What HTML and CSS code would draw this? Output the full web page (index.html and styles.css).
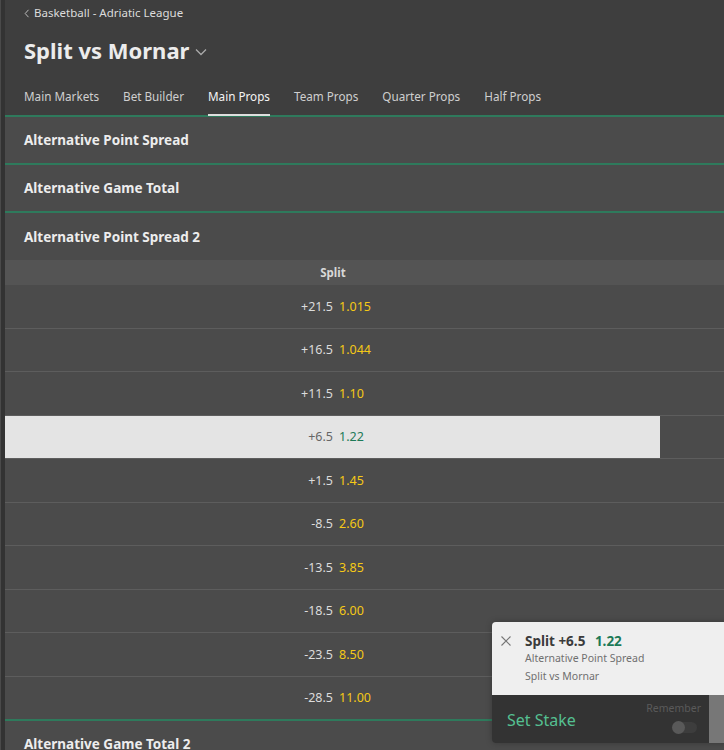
FILE: index.html
```html
<!DOCTYPE html>
<html lang="en">
<head>
<meta charset="utf-8">
<title>Split vs Mornar</title>
<link rel="stylesheet" href="styles.css">
</head>
<body>
<div class="page">
  <div class="gutter"></div>
  <main class="content">
    <header class="header">
      <div class="crumb"><svg class="crumb-arrow" width="6" height="9" viewBox="0 0 6 9"><path d="M4.5 0.8 L1.2 4.5 L4.5 8.2" fill="none" stroke="#bbb" stroke-width="1"/></svg>Basketball - Adriatic League</div>
      <h1 class="title">Split vs Mornar
        <svg class="chev" width="12" height="8" viewBox="0 0 12 8"><path d="M1 1.5 L6 6.5 L11 1.5" fill="none" stroke="#aaa" stroke-width="1.3"/></svg>
      </h1>
      <nav class="tabs">
        <a class="tab">Main Markets</a>
        <a class="tab">Bet Builder</a>
        <a class="tab active">Main Props</a>
        <a class="tab">Team Props</a>
        <a class="tab">Quarter Props</a>
        <a class="tab">Half Props</a>
      </nav>
    </header>

    <section class="market"><h2 class="market-title">Alternative Point Spread</h2></section>
    <section class="market"><h2 class="market-title">Alternative Game Total</h2></section>
    <section class="market open">
      <h2 class="market-title">Alternative Point Spread 2</h2>
      <div class="col-head"><div class="cell">Split</div></div>
      <div class="row"><div class="cell"><span class="hc">+21.5</span><span class="odds">1.015</span></div></div>
      <div class="row"><div class="cell"><span class="hc">+16.5</span><span class="odds">1.044</span></div></div>
      <div class="row"><div class="cell"><span class="hc">+11.5</span><span class="odds">1.10</span></div></div>
      <div class="row"><div class="cell selected"><span class="hc">+6.5</span><span class="odds">1.22</span></div></div>
      <div class="row"><div class="cell"><span class="hc">+1.5</span><span class="odds">1.45</span></div></div>
      <div class="row"><div class="cell"><span class="hc">-8.5</span><span class="odds">2.60</span></div></div>
      <div class="row"><div class="cell"><span class="hc">-13.5</span><span class="odds">3.85</span></div></div>
      <div class="row"><div class="cell"><span class="hc">-18.5</span><span class="odds">6.00</span></div></div>
      <div class="row"><div class="cell"><span class="hc">-23.5</span><span class="odds">8.50</span></div></div>
      <div class="row last"><div class="cell"><span class="hc">-28.5</span><span class="odds">11.00</span></div></div>
    </section>
    <section class="market"><h2 class="market-title">Alternative Game Total 2</h2></section>
  </main>
</div>

<div class="betslip">
  <div class="slip-top">
    <svg class="slip-x" width="10" height="10" viewBox="0 0 10 10"><path d="M0.5 0.5 L9.5 9.5 M9.5 0.5 L0.5 9.5" stroke="#777" stroke-width="1.1"/></svg>
    <div class="slip-info">
      <div class="slip-pick">Split +6.5 <span class="slip-odds">1.22</span></div>
      <div class="slip-sub">Alternative Point Spread</div>
      <div class="slip-sub">Split vs Mornar</div>
    </div>
  </div>
  <div class="slip-bottom">
    <div class="stake">Set Stake</div>
    <div class="remember">
      <span class="remember-label">Remember</span>
      <span class="toggle"><span class="knob"></span></span>
    </div>
    <div class="slip-strip"></div>
  </div>
</div>
</body>
</html>
```

FILE: styles.css
```css
html, body {
  margin: 0;
  padding: 0;
}
body {
  background: #4b4b4b;
  font-family: "Noto Sans", "Open Sans", sans-serif;
  color: #e6e6e6;
  width: 724px;
  height: 750px;
  overflow: hidden;
  position: relative;
}
.page {
  display: flex;
  min-height: 750px;
}
.gutter {
  width: 4px;
  flex: none;
  background: #333;
  border-left: 1px solid #4a4a4a;
}
.content {
  flex: 1;
  min-width: 0;
}
.header {
  background: #3e3e3e;
  padding: 4px 0 0 19px;
  height: 111px;
  box-sizing: content-box;
}
.crumb {
  font-size: 11.5px;
  line-height: 18px;
  color: #dcdcdc;
  display: flex;
  align-items: center;
}
.crumb-arrow {
  margin-right: 4px;
}
.title {
  margin: 14px 0 0;
  font-size: 22px;
  font-weight: 700;
  line-height: 28px;
  color: #ececec;
  display: flex;
  align-items: center;
  gap: 6px;
}
.chev {
  margin-top: 3px;
}
.tabs {
  display: flex;
  gap: 24px;
  margin-top: 23px;
}
.tab {
  font-size: 11.7px;
  line-height: 18px;
  color: #cfcfcf;
  padding-bottom: 9px;
  border-bottom: 2px solid transparent;
  position: relative;
  z-index: 1;
}
.tab.active {
  color: #f4f4f4;
  border-bottom-color: #dedede;
}
.market {
  border-top: 2px solid #2e7a5c;
  background: #4b4b4b;
}
.market-title {
  margin: 0;
  font-size: 13.5px;
  font-weight: 700;
  color: #ededed;
  height: 46px;
  line-height: 46px;
  padding-left: 19px;
}
.market.open .market-title {
  height: 47px;
  line-height: 48px;
}
.col-head {
  background: #545454;
  height: 25px;
}
.col-head .cell {
  width: 655px;
  text-align: center;
  font-size: 11.5px;
  font-weight: 700;
  line-height: 25px;
  color: #d8d8d8;
  padding-left: 1px;
  box-sizing: border-box;
}
.row {
  height: 42.5px;
  border-bottom: 1px solid #5d5d5d;
}
.row.last {
  border-bottom: none;
}
.row .cell {
  width: 655px;
  height: 100%;
  display: grid;
  grid-template-columns: 1fr 1fr;
  column-gap: 6px;
  align-items: center;
  padding-left: 7px;
  box-sizing: border-box;
  font-size: 12.5px;
}
.hc {
  text-align: right;
  color: #dcdcdc;
}
.odds {
  color: #f5c916;
}
.cell.selected {
  background: #e4e4e4;
}
.cell.selected .hc {
  color: #666;
}
.cell.selected .odds {
  color: #1d7a57;
}

.betslip {
  position: absolute;
  left: 492px;
  top: 622px;
  width: 240px;
  height: 121px;
  border-radius: 4px;
  overflow: hidden;
  box-shadow: 0 0 6px rgba(0,0,0,0.25);
}
.slip-top {
  background: #efefef;
  height: 73px;
  display: flex;
  padding: 11px 0 0 9px;
  box-sizing: border-box;
}
.slip-x {
  margin-top: 3px;
  margin-right: 14px;
}
.slip-pick {
  font-size: 13.5px;
  font-weight: 700;
  color: #3b3b3b;
  line-height: 16px;
}
.slip-odds {
  color: #1d7a57;
  margin-left: 6px;
}
.slip-sub {
  font-size: 10.5px;
  color: #6f6f6f;
  line-height: 18px;
}
.slip-sub:first-of-type {
  margin-top: 3px;
}
.slip-bottom {
  background: #333;
  height: 48px;
  display: flex;
  align-items: stretch;
}
.stake {
  color: #55c091;
  font-size: 16px;
  padding-left: 15px;
  line-height: 50px;
  flex: 1;
}
.remember {
  display: flex;
  flex-direction: column;
  align-items: flex-end;
  padding: 6px 8px 0 0;
}
.remember-label {
  font-size: 10.5px;
  color: #5a5a5a;
  line-height: 14px;
}
.toggle {
  margin-top: 7px;
  margin-right: 4px;
  width: 24px;
  height: 11px;
  border-radius: 6px;
  background: #3d3d3d;
  position: relative;
}
.knob {
  position: absolute;
  left: -1px;
  top: -1px;
  width: 13px;
  height: 13px;
  border-radius: 50%;
  background: #595959;
}
.slip-strip {
  width: 23px;
  background: #777;
}
```
